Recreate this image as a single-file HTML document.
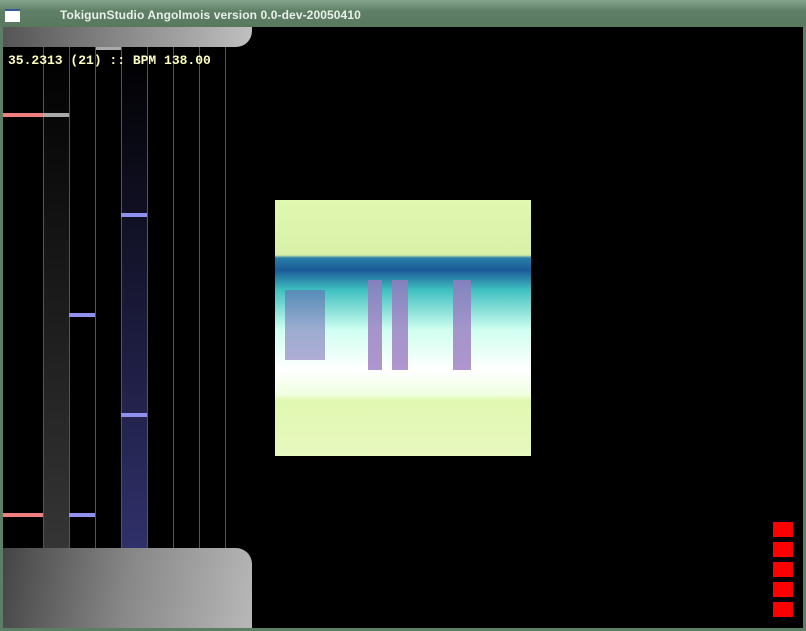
<!DOCTYPE html>
<html><head><style>
*{margin:0;padding:0}
body{width:806px;height:631px;background:#5d7d65;position:relative;overflow:hidden;font-family:"Liberation Sans",sans-serif}
.a{position:absolute}
</style></head><body>
<div class="a" style="left:0;top:0;width:806px;height:27px;background:linear-gradient(#86a48c,#5f8067 40%,#587860)"></div>
<div class="a" style="left:5px;top:9px;width:15px;height:11px;background:#fff;border-top:2px solid #3a5a9a"></div>
<div class="a" style="left:60px;top:8px;font-size:12px;font-weight:bold;color:#e8f0e8;letter-spacing:0.1px">TokigunStudio Angolmois version 0.0-dev-20050410</div>
<div class="a" style="left:3px;top:27px;width:800px;height:601px;background:#000"></div>
<div class="a" style="left:3px;top:27px;width:249px;height:20px;background:linear-gradient(90deg,#555,#c0c0c0);border-bottom-right-radius:16px"></div>
<div class="a" style="left:95px;top:47px;width:26px;height:3px;background:#aaa"></div>
<div class="a" style="left:43px;top:47px;width:26px;height:501px;background:linear-gradient(#000,#353535)"></div>
<div class="a" style="left:121px;top:47px;width:26px;height:501px;background:linear-gradient(#000,#30306a)"></div>
<div class="a" style="left:43px;top:47px;width:1px;height:501px;background:#555"></div>
<div class="a" style="left:69px;top:47px;width:1px;height:501px;background:#555"></div>
<div class="a" style="left:95px;top:47px;width:1px;height:501px;background:#555"></div>
<div class="a" style="left:121px;top:47px;width:1px;height:501px;background:#555"></div>
<div class="a" style="left:147px;top:47px;width:1px;height:501px;background:#555"></div>
<div class="a" style="left:173px;top:47px;width:1px;height:501px;background:#555"></div>
<div class="a" style="left:199px;top:47px;width:1px;height:501px;background:#555"></div>
<div class="a" style="left:225px;top:47px;width:1px;height:501px;background:#555"></div>
<div class="a" style="left:3px;top:113px;width:40px;height:4px;background:#f08080"></div>
<div class="a" style="left:43px;top:113px;width:26px;height:4px;background:#aaa"></div>
<div class="a" style="left:121px;top:213px;width:26px;height:4px;background:#9090f0"></div>
<div class="a" style="left:69px;top:313px;width:26px;height:4px;background:#9090f0"></div>
<div class="a" style="left:121px;top:413px;width:26px;height:4px;background:#9090f0"></div>
<div class="a" style="left:3px;top:513px;width:40px;height:4px;background:#f08080"></div>
<div class="a" style="left:69px;top:513px;width:26px;height:4px;background:#9090f0"></div>
<div class="a" style="left:8px;top:53px;font-family:'Liberation Mono',monospace;font-size:13px;font-weight:bold;color:#ffffc0">35.2313 (21) :: BPM 138.00</div>
<div class="a" style="left:3px;top:548px;width:249px;height:80px;background:linear-gradient(100deg,#444,#888 50%,#b8b8b8);border-top-right-radius:16px"></div>
<div class="a" style="left:275px;top:200px;width:256px;height:256px;background:linear-gradient(#e0f8b0 0,#d8f0a8 55px,#2a7fa8 58px,#1a5a98 70px,#40c0c0 90px,#d0fff0 130px,#fff 170px,#f0ffe0 195px,#e0f8b0 200px,#e8f8c0 256px)"></div>
<div class="a" style="left:368px;top:280px;width:14px;height:90px;background:#9a7ac0;opacity:.8"></div>
<div class="a" style="left:392px;top:280px;width:16px;height:90px;background:#9a7ac0;opacity:.8"></div>
<div class="a" style="left:453px;top:280px;width:18px;height:90px;background:#9a7ac0;opacity:.8"></div>
<div class="a" style="left:285px;top:290px;width:40px;height:70px;background:#6a5ab0;opacity:.5"></div>
<div class="a" style="left:773px;top:522px;width:20px;height:15px;background:#f00"></div>
<div class="a" style="left:773px;top:542px;width:20px;height:15px;background:#f00"></div>
<div class="a" style="left:773px;top:562px;width:20px;height:15px;background:#f00"></div>
<div class="a" style="left:773px;top:582px;width:20px;height:15px;background:#f00"></div>
<div class="a" style="left:773px;top:602px;width:20px;height:15px;background:#f00"></div>
</body></html>
